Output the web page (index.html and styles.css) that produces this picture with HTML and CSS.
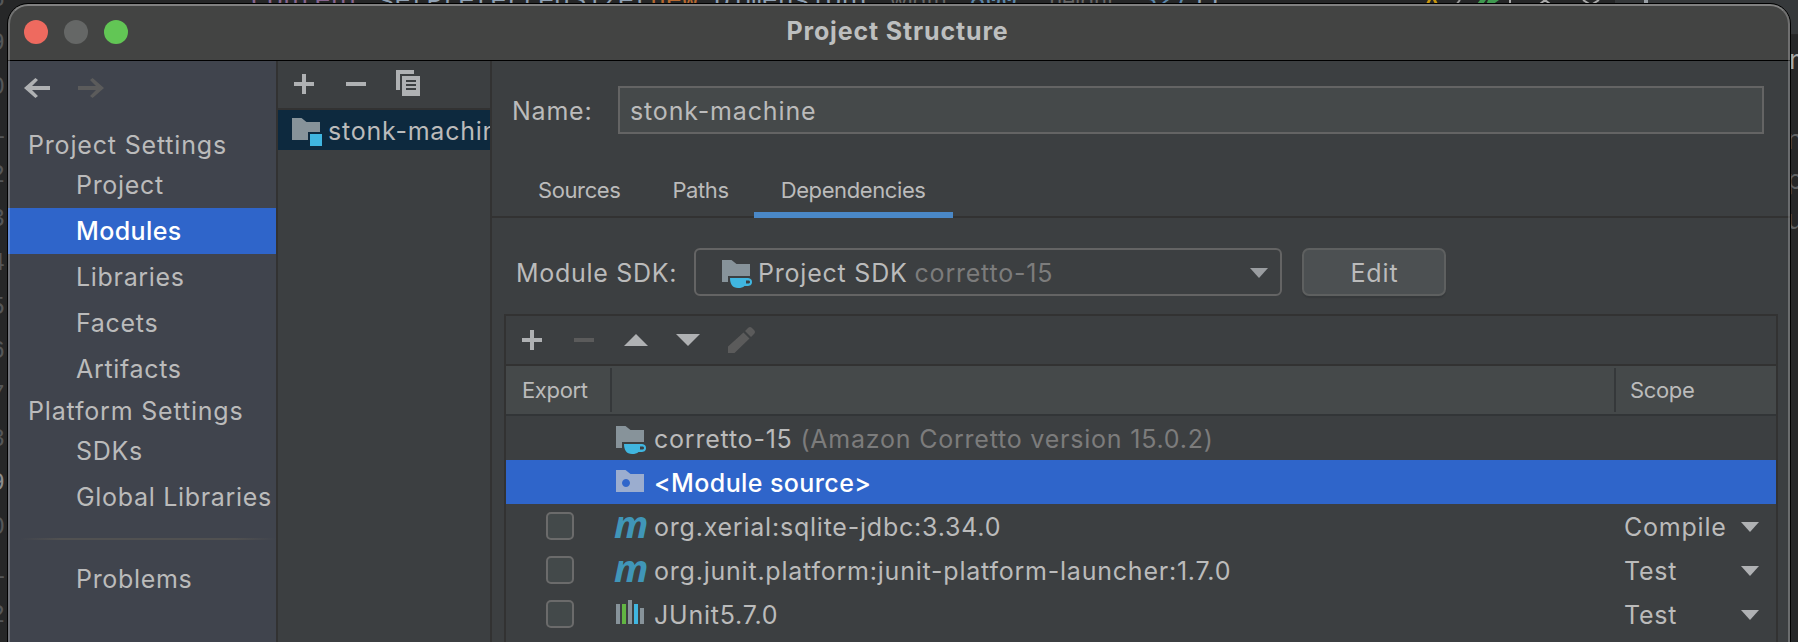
FILE: index.html
```html
<!DOCTYPE html>
<html lang="en">
<head>
<meta charset="utf-8">
<title>Project Structure</title>
<link rel="stylesheet" href="styles.css">
</head>
<body>
<svg class="defs" width="0" height="0">
  <defs>
    <symbol id="plus" viewBox="0 0 20 20"><path d="M8 0h4v8h8v4h-8v8H8v-8H0V8h8z"/></symbol>
    <symbol id="minus" viewBox="0 0 20 20"><path d="M0 8h20v4H0z"/></symbol>
    <symbol id="back" viewBox="0 0 26 20"><path d="M26 8v4H8l6 6-2.600 2L0 10 11.400 0 14 2 8 8z"/></symbol>
    <symbol id="sdk" viewBox="0 0 30 28"><path class="f-gray" d="M0 0h9.500l5 4H28v12H6v6H0z"/><path class="f-cyan" fill-rule="evenodd" d="M8 18h17c3 0 5 1 5 4s-2 4-5 4h-2.500c-1.500 1.500-3.500 2-6.500 2-5.500 0-8-4-8-10zm16 2.500v3h2c1.200 0 2-.4 2-1.500s-.8-1.500-2-1.500z"/></symbol>
    <symbol id="down" viewBox="0 0 18 10"><path d="M0 0h18L9 10z"/></symbol>
  </defs>
</svg>
<div class="editor">
  <div class="gutter"><span>8</span><span>9</span><span>0</span><span>1</span><span>2</span><span>3</span><span>4</span><span>5</span><span>6</span><span>7</span><span>8</span><span class="current">9</span><span>0</span><span>1</span><span>2</span></div>
  <div class="code"><span class="field">content</span>.setPreferredSize(<span class="kw">new</span> Dimension(<span class="hint h1">width:</span><span class="num n1">800</span>, <span class="hint h2">height:</span><span class="num">327</span>));</div>
  <div class="toolstrip"></div>
  <svg class="status" width="240" height="8" viewBox="0 0 240 8"><path fill="#c8960c" d="M8 0h3L9 4H6zM13 0h3l2 4h-3z"/><path stroke="#9a9a9a" stroke-width="2" d="M40 0l-4 5"/><path fill="#3f9a50" d="M60 0h6l-3 4h-6zM68 0h11l-7 5h-6z"/><path stroke="#aaa" stroke-width="2" fill="none" d="M90 0v4M120 4l5-4 5 4M163 0l8 5 8-5"/><path fill="#9aa0a6" d="M224 0h4v4h-4z"/></svg>
  <div class="edge"><span class="lit">m</span><span>n</span><span>p</span><span>u</span></div>
</div>

<div class="window">
  <header class="titlebar">
    <div class="lights"><i class="close"></i><i class="min"></i><i class="max"></i></div>
    <h1>Project Structure</h1>
  </header>
  <div class="body">
    <nav class="sidebar">
      <div class="nav-arrows">
        <svg width="26" height="20"><use href="#back"/></svg>
        <svg class="off flip" width="26" height="20"><use href="#back"/></svg>
      </div>
      <h2>Project Settings</h2>
      <a>Project</a>
      <a class="selected">Modules</a>
      <a>Libraries</a>
      <a>Facets</a>
      <a>Artifacts</a>
      <h2 class="second">Platform Settings</h2>
      <a>SDKs</a>
      <a>Global Libraries</a>
      <hr>
      <a>Problems</a>
    </nav>
    <section class="modules">
      <div class="mod-tools">
        <svg width="20" height="20"><use href="#plus"/></svg>
        <svg width="20" height="20"><use href="#minus"/></svg>
        <svg class="copy" width="24" height="26" viewBox="0 0 24 26"><path fill-rule="evenodd" d="M0 0h18v4H4v16H0zM6 6h18v20H6zM10 10v2h10v-2zM10 14v2h10v-2zM10 18v2h10v-2z"/></svg>
      </div>
      <div class="module"><svg width="30" height="28" viewBox="0 0 30 28"><path class="f-gray" d="M0 0h9.500l5 4H28v10H16v8H0z"/><path class="f-cyan" d="M18 16h12v12H18z"/></svg><span>stonk-machine</span></div>
    </section>
    <main>
      <div class="name-row"><label>Name:</label><div class="input">stonk-machine</div></div>
      <div class="tabs"><span>Sources</span><span>Paths</span><span class="active">Dependencies</span></div>
      <div class="sdk-row">
        <label>Module SDK:</label>
        <div class="combo"><svg width="30" height="28"><use href="#sdk"/></svg><span>Project SDK</span><em>corretto-15</em><svg class="arrow" width="18" height="10"><use href="#down"/></svg></div>
        <button>Edit</button>
      </div>
      <div class="table">
        <div class="dep-tools">
          <svg width="20" height="20"><use href="#plus"/></svg>
          <svg class="off" width="20" height="20"><use href="#minus"/></svg>
          <svg width="24" height="12" viewBox="0 0 24 12"><path d="M12 0l12 12H0z"/></svg>
          <svg width="24" height="12" viewBox="0 0 24 12"><path d="M0 0h24L12 12z"/></svg>
          <svg class="off" width="27" height="26" viewBox="0 0 27 26"><path d="M15.500 5.500l6 6L6.500 26H0v-6.500zM17 4l3-3q2-2 4 0l2 2q2 2 0 4l-3 3z"/></svg>
        </div>
        <div class="thead"><span class="c-export">Export</span><span class="c-name"></span><span class="c-scope">Scope</span></div>
        <div class="row"><span class="chk"></span><svg width="30" height="28"><use href="#sdk"/></svg><span class="dep">corretto-15 <em>(Amazon Corretto version 15.0.2)</em></span></div>
        <div class="row selected"><span class="chk"></span><svg width="30" height="28" viewBox="0 0 30 28"><path fill="#9badcf" fill-rule="evenodd" d="M0 0h9.500l5 4H28v18H0zM10 9a4 4 0 1 0 .01 0z"/></svg><span class="dep">&lt;Module source&gt;</span></div>
        <div class="row"><span class="chk"><i></i></span><b class="maven">m</b><span class="dep">org.xerial:sqlite-jdbc:3.34.0</span><span class="scope">Compile</span><svg class="arrow" width="18" height="10"><use href="#down"/></svg></div>
        <div class="row"><span class="chk"><i></i></span><b class="maven">m</b><span class="dep">org.junit.platform:junit-platform-launcher:1.7.0</span><span class="scope">Test</span><svg class="arrow" width="18" height="10"><use href="#down"/></svg></div>
        <div class="row"><span class="chk"><i></i></span><svg class="lib" width="30" height="24" viewBox="0 0 30 24"><path class="f-gray" d="M0 4h4v20H0zM12 0h4v24h-4zM24 8h4v16h-4z"/><path fill="#62b543" d="M6 4h4v20H6z"/><path class="f-cyan" d="M18 4h4v20h-4z"/></svg><span class="dep">JUnit5.7.0</span><span class="scope">Test</span><svg class="arrow" width="18" height="10"><use href="#down"/></svg></div>
      </div>
    </main>
  </div>
</div>
</body>
</html>
```
FILE: styles.css
```css
* { box-sizing: border-box; }
html, body { margin: 0; height: 642px; overflow: hidden; }
body { position: relative; background: #2b2b2b; color: #bbb; font: 25px/30px Inter, "Liberation Sans", sans-serif; letter-spacing: .78px; }
svg { display: block; flex: none; fill: #afb1b3; }
.defs { position: absolute; }
.f-gray { fill: #87939a; }
.f-cyan { fill: #40b6e0; }
.off { fill: #5b5b5b; }
.flip { transform: scaleX(-1); }
em { font-style: normal; color: #7c7c7c; }

/* editor behind the dialog */
.editor { position: absolute; inset: 0; background: #262728; overflow: hidden; font-family: "Liberation Mono", monospace; font-size: 26.600px; letter-spacing: 0; }
.gutter { position: absolute; left: -10px; top: -22px; width: 16px; display: flex; flex-direction: column; color: #555759; font-size: 25px; }
.gutter span { height: 44px; line-height: 44px; }
.gutter .current { color: #8c8c8c; }
.code { position: absolute; left: 251px; top: -15px; white-space: pre; color: #8fa0b3; line-height: 30px; }
.field { color: #87658f; }
.kw { color: #b8692f; }
.num { color: #5c87ab; }
.hint { display: inline-block; color: #666; font: 22px/30px Inter, sans-serif; }
.h1 { width: 80px; margin-left: 16px; }
.h2 { width: 92px; }
.toolstrip { position: absolute; left: 1615px; right: 0; top: 0; height: 35px; background: #36393b; border-bottom: 1px solid #292929; }
.status { position: absolute; left: 1420px; top: 0; fill: none; }
.edge { position: absolute; left: 1787px; top: 44px; display: flex; flex-direction: column; gap: 10px; color: #606264; font-family: Inter, sans-serif; }
.edge .lit { color: #aaa; margin-bottom: 40px; margin-left: 2px; }

.window { position: absolute; left: 7px; top: 3px; width: 1784px; height: 680px; border: 1px solid #000; border-radius: 21px; background: #3c3f41; overflow: hidden; }
.window::after { content: ""; position: absolute; inset: 0; border: 2px solid rgba(255,255,255,.24); border-top-color: rgba(255,255,255,.33); border-radius: 20px; pointer-events: none; }
.titlebar { height: 57px; display: grid; grid-template-columns: 1fr auto 1fr; align-items: center; background: #434443; border-bottom: 1px solid #000; }
.titlebar h1 { margin: 0; padding: 0 3px 3px 0; font-size: 25px; line-height: 30px; font-weight: 700; color: #bdbfbf; letter-spacing: .85px; }
.lights { display: flex; gap: 16px; padding-left: 16px; }
.lights i { width: 24px; height: 24px; border-radius: 50%; }
.close { background: #ee6a5f; }
.min { background: #656766; }
.max { background: #62c655; }
.body { display: flex; height: 622px; }

.sidebar { width: 270px; border-right: 2px solid #323232; background: #40444d; flex: none; letter-spacing: .68px; }
.nav-arrows { display: flex; gap: 28px; padding: 17px 0 0 16px; height: 66px; }
.sidebar h2 { margin: 0; padding-left: 20px; height: 35px; line-height: 37px; font-size: 25px; font-weight: 400; white-space: nowrap; letter-spacing: .82px; }
.sidebar h2.second { height: 36px; line-height: 38px; }
.sidebar a { display: block; height: 46px; line-height: 47px; padding-left: 68px; white-space: nowrap; }
.selected { background: #2f65ca; color: #fff; letter-spacing: .4px; }
.sidebar a.selected { font-weight: 500; }
.sidebar hr { height: 2px; margin: 18px 0 16px 12px; border: 0; background: linear-gradient(90deg, transparent, #515151 16%, #515151 84%, transparent); }

.modules { width: 214px; flex: none; border-right: 2px solid #323232; overflow: hidden; }
.mod-tools { display: flex; gap: 32px; padding: 13px 0 0 16px; height: 49px; border-bottom: 2px solid #323232; }
.mod-tools .copy { margin: -4px 0 0 -2px; }
.module { display: flex; height: 40px; padding-left: 14px; background: #0d293e; white-space: nowrap; line-height: 42px; }
.module svg { margin: 8px 6px 0 0; }

main { flex: 1; min-width: 0; }
.name-row { display: flex; align-items: center; padding: 25px 26px 0 20px; height: 73px; }
.name-row label { width: 106px; padding-top: 2px; }
.input { flex: 1; height: 48px; border: 2px solid #646464; background: #45494a; padding-left: 10px; line-height: 46px; letter-spacing: .85px; }
.tabs { display: flex; margin-top: 24px; height: 60px; border-bottom: 2px solid #323232; padding-left: 19px; font-size: 22px; line-height: 64px; letter-spacing: -.4px; }
.tabs span { height: 60px; padding: 0 27px; margin-right: -2px; }
.tabs .active { border-bottom: 6px solid #4a88c7; }
.sdk-row { display: flex; align-items: center; padding-left: 24px; margin-top: 30px; height: 48px; }
.sdk-row label { width: 178px; white-space: nowrap; padding-top: 2px; letter-spacing: .7px; }
.combo { display: flex; width: 588px; height: 48px; border: 2px solid #646464; border-radius: 6px; line-height: 46px; padding-left: 26px; }
.combo svg { margin: 10px 6px 0 0; }
.combo em { margin-left: 7px; }
.combo .arrow { margin: 18px 12px 0 auto; fill: #9a9da0; }
button { width: 144px; height: 48px; margin-left: 20px; border: 2px solid #5e6060; border-radius: 7px; background: #4c5052; box-shadow: 0 2px 1px #36393b; color: #bbb; font: inherit; letter-spacing: .9px; padding: 2px 0 0 1px; }
.table { margin: 18px 12px 0 12px; border: 2px solid #323232; height: 380px; }
.dep-tools { display: flex; align-items: center; height: 50px; padding: 0 0 0 16px; border-bottom: 2px solid #323232; gap: 30px; }
.dep-tools svg:first-child { margin-right: 2px; }
.dep-tools svg:nth-child(4) { margin: 0 -2px; }
.thead { display: flex; height: 50px; padding: 2px 0; background: #45494a; border-bottom: 2px solid #323537; font-size: 22px; line-height: 44px; letter-spacing: -.35px; }
.thead span { height: 44px; }
.c-export { width: 106px; padding-left: 16px; border-right: 2px solid #35383a; }
.c-name { flex: 1; border-right: 2px solid #35383a; }
.c-scope { width: 160px; padding-left: 14px; }
.row { display: flex; height: 44px; line-height: 47px; }
.row.selected { font-weight: 500; }
.chk { width: 110px; padding: 8px 0 0 40px; flex: none; }
.chk i { display: block; width: 28px; height: 28px; border: 2px solid #6b6b6b; border-radius: 5px; background: #43494a; }
.row > svg { margin: 10px 8px 0 0; }
.row > .lib { margin-top: 8px; }
.maven { width: 38px; color: #4096b8; font: italic bold 38px/38px "Open Sans", sans-serif; text-indent: -2px; }
.dep { flex: 1; white-space: pre; }
.scope { width: 117px; }
.row > .arrow { margin: 18px 17px 0 0; }
```
